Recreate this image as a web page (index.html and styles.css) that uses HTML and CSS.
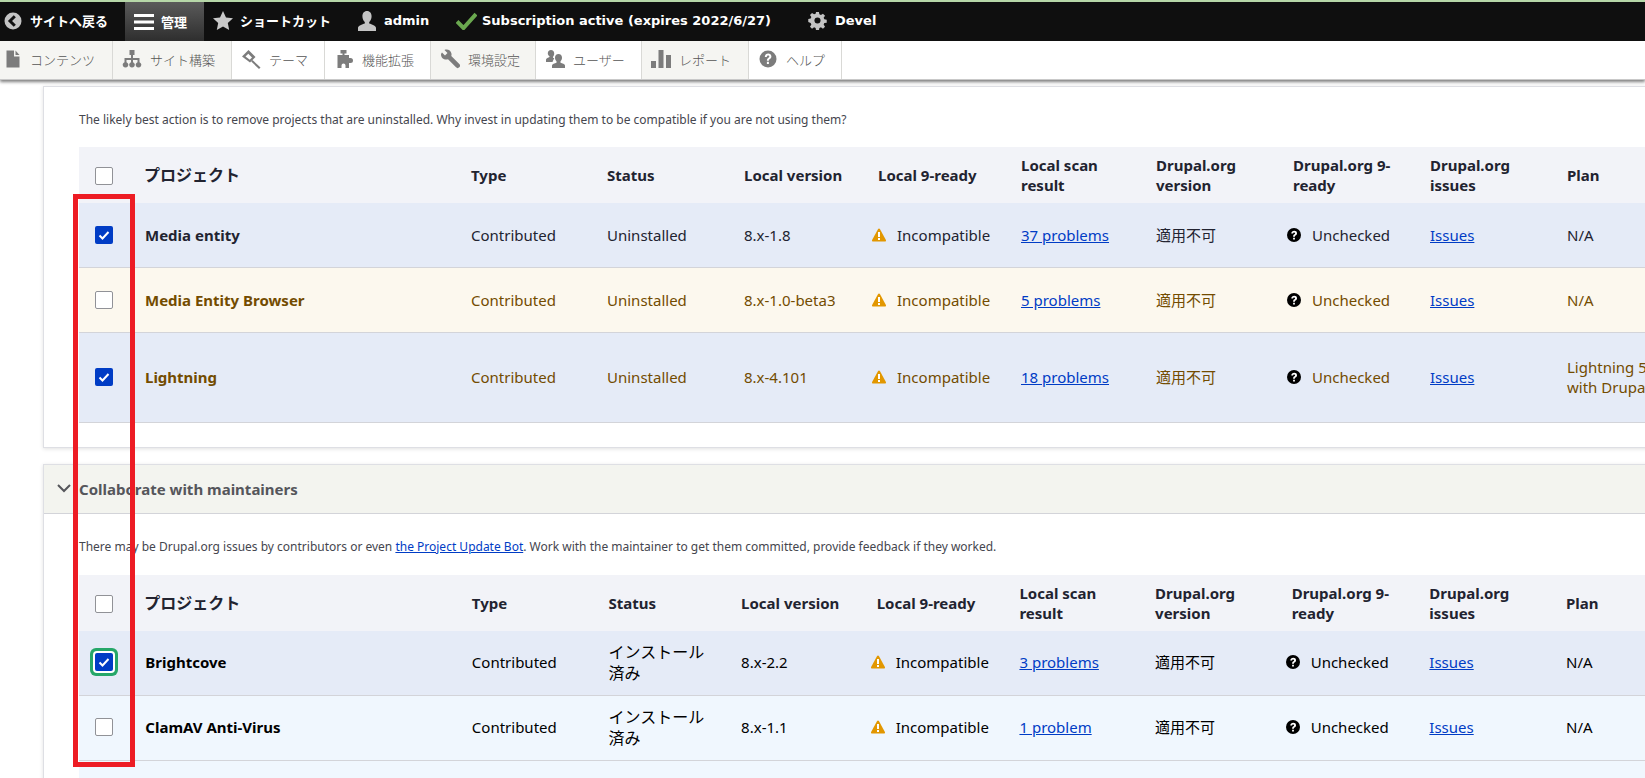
FILE: index.html
```html
<!DOCTYPE html>
<html lang="ja">
<head>
<meta charset="utf-8">
<title>Upgrade status</title>
<link rel="stylesheet" href="styles.css">
</head>
<body>
<div class="page">
  <header class="toolbar">
    <nav class="topbar">
      <a class="bar-item back"><svg viewBox="0 0 18 18" width="18" height="18"><circle cx="9" cy="9" r="8.5" fill="#c4c4c4"/><path d="M10.8 4.2 6 9l4.8 4.8" fill="none" stroke="#111" stroke-width="3"/></svg><span class="jp">サイトへ戻る</span></a>
      <a class="bar-item manage"><svg viewBox="0 0 20 16" width="20" height="16"><path d="M0 0h20v3H0zM0 6.500h20v3H0zM0 13h20v3H0z" fill="#fff" /></svg><span class="jp">管理</span></a>
      <a class="bar-item star"><svg viewBox="0 0 20 19" width="20" height="19"><path d="m10 0 3 6.500 7 .8-5.200 4.700 1.400 7L10 15.500 3.800 19l1.400-7L0 7.300l7-.8z" fill="#c9c9c9"/></svg><span class="jp">ショートカット</span></a>
      <a class="bar-item user"><svg viewBox="0 0 18 20" width="18" height="20"><path d="M9 0c3 0 4.600 2.300 4.600 5.200 0 2.400-1 4.600-2.400 5.800v1.600c2.600.9 6.800 2.200 6.800 4.400v3H0v-3c0-2.200 4.200-3.500 6.800-4.400V11C5.400 9.800 4.400 7.600 4.400 5.200 4.400 2.300 6 0 9 0z" fill="#c4c4c4"/></svg><span>admin</span></a>
      <a class="bar-item sub"><svg viewBox="0 0 21 18" width="21" height="18"><path d="M1 9.500 7.500 16 20 2" fill="none" stroke="#6aa84f" stroke-width="4"/></svg><span>Subscription active (expires 2022/6/27)</span></a>
      <a class="bar-item devel"><svg viewBox="0 0 20 20" width="19" height="19"><path d="M8.300 0h3.400l.5 2.800 1.800.8 2.400-1.600 2.400 2.400-1.600 2.400.8 1.800 2.800.5v3.400l-2.800.5-.8 1.800 1.600 2.400-2.400 2.400-2.400-1.600-1.800.8-.5 2.800H8.300l-.5-2.800-1.800-.8-2.400 1.600-2.400-2.400 1.600-2.400-.8-1.800L-.8 11.700V8.300l2.800-.5.8-1.800L1.200 3.600l2.400-2.400L6 2.800l1.800-.8z" transform="translate(1 1) scale(.9)" fill="#c4c4c4"/><circle cx="10" cy="10" r="3.200" fill="#111"/></svg><span>Devel</span></a>
    </nav>
    <nav class="tray">
      <a class="tray-item shade first"><svg viewBox="0 0 20 20" width="20" height="20"><path d="M3.500 1.500h7.500v6h5.500v11h-13zM12.500 1.500l4 4.500h-4z" fill="#7c7c7c"/></svg><span>コンテンツ</span></a>
      <a class="tray-item shade"><svg viewBox="0 0 20 20" width="20" height="20"><path d="M7.500 1h5v5h-1.500v3h6.500v4.200a2.800 2.800 0 1 1-2 0V11H11v2.200a2.800 2.800 0 1 1-2 0V11H4.500v2.200a2.800 2.800 0 1 1-2 0V9H9V6H7.500z" fill="#7c7c7c"/></svg><span>サイト構築</span></a>
      <a class="tray-item"><svg viewBox="0 0 21 20" width="21" height="20"><path d="M7.500 1 14.500 8 9 13.500 1 7.500z" fill="#7c7c7c"/><path d="M7.300 4.800 4.500 7.500l4.300 3.200 2.200-2.200z" fill="#fff"/><path d="m11.500 11 8 7.500-1.500 1.500-7.800-7.500z" fill="#7c7c7c"/></svg><span>テーマ</span></a>
      <a class="tray-item"><svg viewBox="0 0 20 20" width="20" height="20"><path d="M6.500 1h6v3.500h-2V6H15v3h1.500a2.500 2.500 0 1 1 0 5H15v5h-3.500v-2.500a2 2 0 1 0-4 0V19H3.500V6h5V4.500h-2z" fill="#7c7c7c"/></svg><span>機能拡張</span></a>
      <a class="tray-item shade"><svg viewBox="0 0 20 20" width="20" height="20"><path d="M2 3.500 5 6.500 7.500 4 4.500 1C7.500-.2 11 1.500 11.500 4.800c.1.800 0 1.500-.2 2.200l8 8a2.300 2.300 0 0 1-3.300 3.300L8 10.300C4.500 11.500 1 9 1 5.500c0-.7.400-1.400 1-2z" fill="#7c7c7c"/></svg><span>環境設定</span></a>
      <a class="tray-item"><svg viewBox="0 0 20 20" width="20" height="20"><path d="M6 1c2 0 3.200 1.500 3.200 3.500 0 1.300-.5 2.500-1.200 3.300v1l1.300.5C8.600 10.500 8 11.500 7.500 13H1v-2.500c0-1 2.500-1.800 3.500-2.400v-.8C3.500 6.600 2.800 5.600 2.800 4.500 2.800 2.500 4 1 6 1zM13.500 5c2.200 0 3.500 1.700 3.500 3.800 0 1.400-.6 2.700-1.500 3.500v1.500c1.600.6 4.500 1.300 4.500 2.700v2.500H7v-2.500c0-1.400 2.900-2.100 4.500-2.700v-1.500c-.9-.8-1.500-2.100-1.500-3.500C10 6.700 11.300 5 13.500 5z" fill="#7c7c7c"/></svg><span>ユーザー</span></a>
      <a class="tray-item shade"><svg viewBox="0 0 20 20" width="20" height="20"><path d="M0 12h5v7H0zM7.500 1h5v18h-5zM15 6h5v13h-5z" fill="#7c7c7c"/></svg><span>レポート</span></a>
      <a class="tray-item"><svg viewBox="0 0 20 20" width="20" height="20"><circle cx="10" cy="10" r="8.500" fill="#7c7c7c"/><path d="M6.800 8c0-4.500 6.600-4.500 6.600-.5 0 2.400-2.500 2.300-2.500 4.200H8.900c0-2.900 2.400-2.900 2.400-4.200 0-1.400-2.500-1.200-2.500.5zM8.900 12.800h2v2.200h-2z" fill="#fff"/></svg><span>ヘルプ</span></a>
    </nav>
  </header>

  <main class="main">
    <section class="card first-card">
      <div class="card-body">
        <p class="desc">The likely best action is to remove projects that are uninstalled. Why invest in updating them to be compatible if you are not using them?</p>
        <table class="grid grid-a">
          <colgroup><col class="c0"><col class="c1"><col class="c2"><col class="c3"><col class="c4"><col class="c5"><col class="c6"><col class="c7"><col class="c8"><col class="c9"><col class="c10"></colgroup>
          <thead><tr>
            <th class="chk"><span class="box"></span></th><th class="proj">プロジェクト</th><th>Type</th><th>Status</th><th>Local version</th><th class="ind">Local 9-ready</th><th>Local scan<br>result</th><th>Drupal.org<br>version</th><th class="ind">Drupal.org 9-<br>ready</th><th>Drupal.org<br>issues</th><th>Plan</th>
          </tr></thead>
          <tbody>
            <tr class="sel short">
              <td class="chk"><span class="box on"><svg viewBox="0 0 18 18" width="18" height="18"><path d="m4.500 9.500 3 3 6-6.500" fill="none" stroke="#fff" stroke-width="2"/></svg></span></td><td class="name">Media entity</td><td>Contributed</td><td>Uninstalled</td><td>8.x-1.8</td>
              <td><span class="st"><svg class="ic" viewBox="0 0 14 14" width="14" height="14"><path d="M7 .5c.4 0 .7.200.9.500l6 11c.3.600-.1 1.500-.9 1.500H1c-.8 0-1.200-.9-.9-1.500l6-11c.2-.3.500-.5.900-.5z" fill="#e29700"/><path d="M6 4h2v5H6zM6 10h2v2H6z" fill="#fff"/></svg>Incompatible</span></td>
              <td><a class="lnk">37 problems</a></td><td>適用不可</td>
              <td><span class="st"><svg class="ic" viewBox="0 0 14 14" width="14" height="14"><circle cx="7" cy="7" r="7" fill="#000"/><path d="M4.300 5.500C4.300 2 10 2 10 5.200c0 2.200-2.100 1.800-2.100 3.500H6.100c0-2.600 2-2.300 2-3.500 0-1.100-2-1-2 .3zM6.100 9.700h1.800v1.800H6.100z" fill="#fff"/></svg>Unchecked</span></td>
              <td><a class="lnk">Issues</a></td><td>N/A</td>
            </tr>
            <tr class="warn">
              <td class="chk"><span class="box"></span></td><td class="name">Media Entity Browser</td><td>Contributed</td><td>Uninstalled</td><td>8.x-1.0-beta3</td>
              <td><span class="st"><svg class="ic" viewBox="0 0 14 14" width="14" height="14"><path d="M7 .5c.4 0 .7.200.9.500l6 11c.3.600-.1 1.500-.9 1.500H1c-.8 0-1.200-.9-.9-1.500l6-11c.2-.3.500-.5.900-.5z" fill="#e29700"/><path d="M6 4h2v5H6zM6 10h2v2H6z" fill="#fff"/></svg>Incompatible</span></td>
              <td><a class="lnk">5 problems</a></td><td>適用不可</td>
              <td><span class="st"><svg class="ic" viewBox="0 0 14 14" width="14" height="14"><circle cx="7" cy="7" r="7" fill="#000"/><path d="M4.300 5.500C4.300 2 10 2 10 5.200c0 2.200-2.100 1.800-2.100 3.500H6.100c0-2.600 2-2.300 2-3.500 0-1.100-2-1-2 .3zM6.100 9.700h1.800v1.800H6.100z" fill="#fff"/></svg>Unchecked</span></td>
              <td><a class="lnk">Issues</a></td><td>N/A</td>
            </tr>
            <tr class="sel brown tall">
              <td class="chk"><span class="box on"><svg viewBox="0 0 18 18" width="18" height="18"><path d="m4.500 9.500 3 3 6-6.500" fill="none" stroke="#fff" stroke-width="2"/></svg></span></td><td class="name">Lightning</td><td>Contributed</td><td>Uninstalled</td><td>8.x-4.101</td>
              <td><span class="st"><svg class="ic" viewBox="0 0 14 14" width="14" height="14"><path d="M7 .5c.4 0 .7.200.9.500l6 11c.3.600-.1 1.500-.9 1.500H1c-.8 0-1.200-.9-.9-1.500l6-11c.2-.3.500-.5.900-.5z" fill="#e29700"/><path d="M6 4h2v5H6zM6 10h2v2H6z" fill="#fff"/></svg>Incompatible</span></td>
              <td><a class="lnk">18 problems</a></td><td>適用不可</td>
              <td><span class="st"><svg class="ic" viewBox="0 0 14 14" width="14" height="14"><circle cx="7" cy="7" r="7" fill="#000"/><path d="M4.300 5.500C4.300 2 10 2 10 5.200c0 2.200-2.100 1.800-2.100 3.500H6.100c0-2.600 2-2.300 2-3.500 0-1.100-2-1-2 .3zM6.100 9.700h1.800v1.800H6.100z" fill="#fff"/></svg>Unchecked</span></td>
              <td><a class="lnk">Issues</a></td><td>Lightning 5.x is compatible<br>with Drupal 9</td>
            </tr>
          </tbody>
        </table>
      </div>
    </section>

    <section class="card">
      <div class="card-head"><svg viewBox="0 0 14 9" width="14" height="9"><path d="m1 1 6 6 6-6" fill="none" stroke="#55565b" stroke-width="2"/></svg><span>Collaborate with maintainers</span></div>
      <div class="card-body">
        <p class="desc d2">There may be Drupal.org issues by contributors or even <a class="lnk">the Project Update Bot</a>. Work with the maintainer to get them committed, provide feedback if they worked.</p>
        <table class="grid grid-b">
          <colgroup><col class="c0"><col class="c1"><col class="c2"><col class="c3"><col class="c4"><col class="c5"><col class="c6"><col class="c7"><col class="c8"><col class="c9"><col class="c10"></colgroup>
          <thead><tr>
            <th class="chk"><span class="box"></span></th><th class="proj">プロジェクト</th><th>Type</th><th>Status</th><th>Local version</th><th class="ind">Local 9-ready</th><th>Local scan<br>result</th><th>Drupal.org<br>version</th><th class="ind">Drupal.org 9-<br>ready</th><th>Drupal.org<br>issues</th><th>Plan</th>
          </tr></thead>
          <tbody>
            <tr class="sel black">
              <td class="chk"><span class="box on focus"><svg viewBox="0 0 18 18" width="18" height="18"><path d="m4.500 9.500 3 3 6-6.500" fill="none" stroke="#fff" stroke-width="2"/></svg></span></td><td class="name">Brightcove</td><td>Contributed</td><td class="jpst">インストール<br>済み</td><td>8.x-2.2</td>
              <td><span class="st"><svg class="ic" viewBox="0 0 14 14" width="14" height="14"><path d="M7 .5c.4 0 .7.200.9.500l6 11c.3.600-.1 1.500-.9 1.500H1c-.8 0-1.200-.9-.9-1.500l6-11c.2-.3.500-.5.900-.5z" fill="#e29700"/><path d="M6 4h2v5H6zM6 10h2v2H6z" fill="#fff"/></svg>Incompatible</span></td>
              <td><a class="lnk">3 problems</a></td><td>適用不可</td>
              <td><span class="st"><svg class="ic" viewBox="0 0 14 14" width="14" height="14"><circle cx="7" cy="7" r="7" fill="#000"/><path d="M4.300 5.500C4.300 2 10 2 10 5.200c0 2.200-2.100 1.800-2.100 3.500H6.100c0-2.600 2-2.300 2-3.500 0-1.100-2-1-2 .3zM6.100 9.700h1.800v1.800H6.100z" fill="#fff"/></svg>Unchecked</span></td>
              <td><a class="lnk">Issues</a></td><td>N/A</td>
            </tr>
            <tr class="info black">
              <td class="chk"><span class="box"></span></td><td class="name">ClamAV Anti-Virus</td><td>Contributed</td><td class="jpst">インストール<br>済み</td><td>8.x-1.1</td>
              <td><span class="st"><svg class="ic" viewBox="0 0 14 14" width="14" height="14"><path d="M7 .5c.4 0 .7.200.9.500l6 11c.3.600-.1 1.500-.9 1.500H1c-.8 0-1.200-.9-.9-1.500l6-11c.2-.3.500-.5.900-.5z" fill="#e29700"/><path d="M6 4h2v5H6zM6 10h2v2H6z" fill="#fff"/></svg>Incompatible</span></td>
              <td><a class="lnk">1 problem</a></td><td>適用不可</td>
              <td><span class="st"><svg class="ic" viewBox="0 0 14 14" width="14" height="14"><circle cx="7" cy="7" r="7" fill="#000"/><path d="M4.300 5.500C4.300 2 10 2 10 5.200c0 2.200-2.100 1.800-2.100 3.500H6.100c0-2.600 2-2.300 2-3.500 0-1.100-2-1-2 .3zM6.100 9.700h1.800v1.800H6.100z" fill="#fff"/></svg>Unchecked</span></td>
              <td><a class="lnk">Issues</a></td><td>N/A</td>
            </tr>
            <tr class="info"><td colspan="11" class="blank"></td></tr>
          </tbody>
        </table>
      </div>
    </section>
  </main>
  <div class="red-box"></div>
</div>
</body>
</html>
```

FILE: styles.css
```css
* { box-sizing: border-box; }
html, body { margin: 0; height: 100%; overflow: hidden; background: #fff; }
body { font-family: "Noto Sans", "Noto Sans CJK JP", sans-serif; color: #222330; }
.page { position: relative; width: 1645px; height: 778px; overflow: hidden; }

.toolbar { position: relative; z-index: 2; box-shadow: 0 2px 3px rgba(0,0,0,.5); }
.topbar { display: flex; height: 41px; background: #0f0f0f; border-top: 2px solid #b6d7a8; padding-bottom: 2px; color: #fff; font: bold 13px "DejaVu Sans", sans-serif; }
.bar-item { display: flex; align-items: center; flex: none; white-space: nowrap; }
.jp { font-family: "Noto Sans CJK JP", sans-serif; font-weight: 700; font-size: 13px; }
.back { width: 125px; padding-left: 4px; gap: 8px; }
.manage { width: 79px; padding-left: 9px; gap: 7px; margin-bottom: -2px; background: linear-gradient(#5a5a5a, #2e2e2e); }
.star { width: 154px; padding-left: 9px; gap: 7px; }
.user { width: 98px; gap: 8px; }
.sub { width: 352px; gap: 5px; }
.devel { gap: 8px; }

.tray { display: flex; height: 39px; background: #fff; border-bottom: 1px solid #c9c9c9; color: #555; font: 13px "Noto Sans CJK JP", sans-serif; }
.tray-item { display: flex; align-items: center; flex: none; gap: 8px; padding-left: 9px; padding-bottom: 2px; border-right: 1px solid #d9d9d6; }
.tray-item svg { flex: none; }
.tray-item span { font-weight: 300; }
.tray-item.shade { background: #f5f5f2; }
.tray-item.first { padding-left: 3px; gap: 7px; }
.tray-item:nth-child(1) { width: 113px; }
.tray-item:nth-child(2) { width: 119px; }
.tray-item:nth-child(3) { width: 93px; gap: 7px; }
.tray-item:nth-child(4) { width: 106px; }
.tray-item:nth-child(5) { width: 105px; }
.tray-item:nth-child(6) { width: 106px; }
.tray-item:nth-child(7) { width: 107px; }
.tray-item:nth-child(8) { width: 93px; }

.main { padding: 6px 0 0 43px; width: 1900px; }
.card { background: #fff; border: 1px solid #dedfe4; box-shadow: 0 1px 4px rgba(0,0,0,.12); margin-bottom: 16px; }
.card-head { display: flex; align-items: center; height: 49px; padding-left: 13px; gap: 8px; background: #f3f4ef; border-bottom: 1px solid #d3d4d9; color: #55565b; font-weight: 700; font-size: 15px; }
.card-body { padding: 0 0 24px 35px; }
.desc { margin: 0; padding-top: 24px; height: 60px; font-size: 12px; line-height: 18px; color: #45464e; }
.desc.d2 { padding-top: 24px; height: 61px; }

.grid { table-layout: fixed; width: 1688px; border-collapse: collapse; font-size: 15px; line-height: 20px; }
.grid th { height: 56px; padding: 0; background: #f2f3f8; text-align: left; font-weight: 700; }
.grid td { height: 65px; padding: 0; border-bottom: 1px solid #d3d4d9; vertical-align: middle; }
.grid-b td { padding-bottom: 2px; }
.grid th.chk, .grid td.chk { padding-left: 16px; }
.grid th.chk .box { margin-top: 2px; }
.grid th.ind { padding-left: 6px; }
.grid th.proj { font: 700 16px "Noto Sans CJK JP", sans-serif; padding-bottom: 2px; }
.grid td.name { font-weight: 700; padding-left: 1px; }
.grid td.jpst { font: 16px/21px "Noto Sans CJK JP", sans-serif; }
.grid td.blank { height: 30px; border: 0; }
.grid tr.short td { height: 64px; }
.grid tr.tall td { height: 90px; }

.c0 { width: 65px; }
.grid-a .c1 { width: 327px; } .grid-a .c2 { width: 136px; } .grid-a .c3 { width: 137px; } .grid-a .c4 { width: 128px; } .grid-a .c5 { width: 149px; } .grid-a .c6 { width: 135px; } .grid-a .c7 { width: 131px; } .grid-a .c8 { width: 143px; } .grid-a .c9 { width: 137px; } .grid-a .c10 { width: 200px; }
.grid-b .c1 { width: 326px; } .grid-b .c2 { width: 136px; } .grid-b .c3 { width: 132px; } .grid-b .c4 { width: 129px; } .grid-b .c5 { width: 148px; } .grid-b .c6 { width: 135px; } .grid-b .c7 { width: 130px; } .grid-b .c8 { width: 143px; } .grid-b .c9 { width: 136px; } .grid-b .c10 { width: 200px; }

tr.sel td { background: #e5ebf7; }
tr.warn td { background: #fcf8ee; color: #734c00; }
tr.info td { background: #f0f7fe; }
tr.brown td { color: #734c00; }
tr.black td { color: #000; }

.box { display: block; width: 18px; height: 18px; background: #fff; border: 1px solid #919297; border-radius: 2px; position: relative; }
.box.on { background: #003cc5; border: 0; }
.box svg { display: block; }
.box.focus { box-shadow: 0 0 0 2px #fff, 0 0 0 5px #26a769; border-radius: 2px; }

.st { display: flex; align-items: center; gap: 11px; }
.ic { flex: none; }
.lnk { color: #003cc5; text-decoration: underline; }

.red-box { position: absolute; left: 73px; top: 194px; width: 62px; height: 573px; border: 5px solid #ed1c24; z-index: 3; }
```
